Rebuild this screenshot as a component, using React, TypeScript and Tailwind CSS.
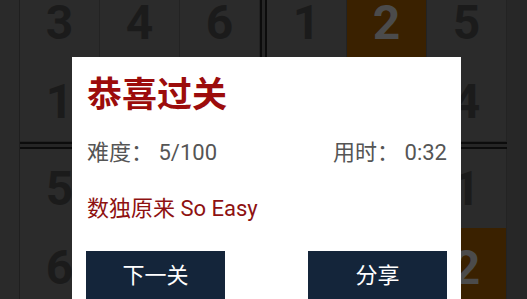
import React from 'react';

const rows: string[][] = [
  ['3', '4', '6', '1', '2', '5'],
  ['1', '', '', '', '', '4'],
  ['5', '', '', '', '', '1'],
  ['6', '', '', '', '', '2'],
];

const marked = new Set(['0-4', '3-5']);

function Cell({ value, hot }: { value: string; hot: boolean }) {
  return (
    <div
      className={`w-[79px] h-[79px] shrink-0 flex items-center justify-center text-[48px] font-bold leading-none ${
        hot ? 'bg-[#3a2100] text-[#4b4b4b]' : 'bg-[#2b2b2b] text-[#1b1b1b]'
      }`}
    >
      {value}
    </div>
  );
}

function ThickV() {
  return (
    <div className="flex shrink-0">
      <div className="w-px bg-[#232323]" />
      <div className="w-[2px] bg-[#0c0c0c]" />
      <div className="w-[3px] bg-[#262626]" />
      <div className="w-[2px] bg-[#0c0c0c]" />
    </div>
  );
}

function ThickH() {
  return (
    <div className="flex flex-col">
      <div className="h-px bg-[#232323]" />
      <div className="h-[2px] bg-[#0c0c0c]" />
      <div className="h-[3px] bg-[#262626]" />
      <div className="h-[2px] bg-[#0c0c0c]" />
    </div>
  );
}

function BoardRow({ cells, r }: { cells: string[]; r: number }) {
  return (
    <div className="flex">
      {cells.map((v, c) => (
        <React.Fragment key={c}>
          <Cell value={v} hot={marked.has(`${r}-${c}`)} />
          {c === 2 ? <ThickV /> : <div className="w-px shrink-0 bg-[#232323]" />}
        </React.Fragment>
      ))}
    </div>
  );
}

export default function App() {
  return (
    <div
      className="relative w-[527px] h-[299px] overflow-hidden bg-[#292929]"
      style={{ fontFamily: "Roboto, 'Noto Sans CJK SC', sans-serif" }}
    >
      {/* dimmed board */}
      <div className="flex h-full">
        <div className="w-[20px] shrink-0 border-r border-[#1f1f1f] bg-[#2a2a2a]" />
        <div className="flex flex-col mt-[-17px]">
          <BoardRow cells={rows[0]} r={0} />
          <div className="h-px bg-[#232323]" />
          <BoardRow cells={rows[1]} r={1} />
          <ThickH />
          <BoardRow cells={rows[2]} r={2} />
          <div className="h-px bg-[#232323]" />
          <BoardRow cells={rows[3]} r={3} />
        </div>
        <div className="flex-1 bg-[#272727]" />
      </div>

      {/* result dialog */}
      <div className="absolute left-[72px] top-[57px] w-[389px] h-[260px] bg-white px-[14px] pt-[18px]">
        <h1 className="pl-px text-[35px] font-bold leading-[41px] text-[#9c0c0c]">恭喜过关</h1>
        <div className="mt-[24px] flex justify-between text-[22px] leading-[26px] text-[#555555]">
          <span className="pl-px">难度： 5/100</span>
          <span>用时： 0:32</span>
        </div>
        <p className="mt-[30px] pl-px text-[22px] leading-[26px] text-[#8e1111]">数独原来 So Easy</p>
        <div className="mt-[29px] flex justify-between">
          <button className="w-[139px] h-[48px] bg-[#14253a] text-white text-[22px]">下一关</button>
          <button className="w-[139px] h-[48px] bg-[#14253a] text-white text-[22px]">分享</button>
        </div>
      </div>
    </div>
  );
}
